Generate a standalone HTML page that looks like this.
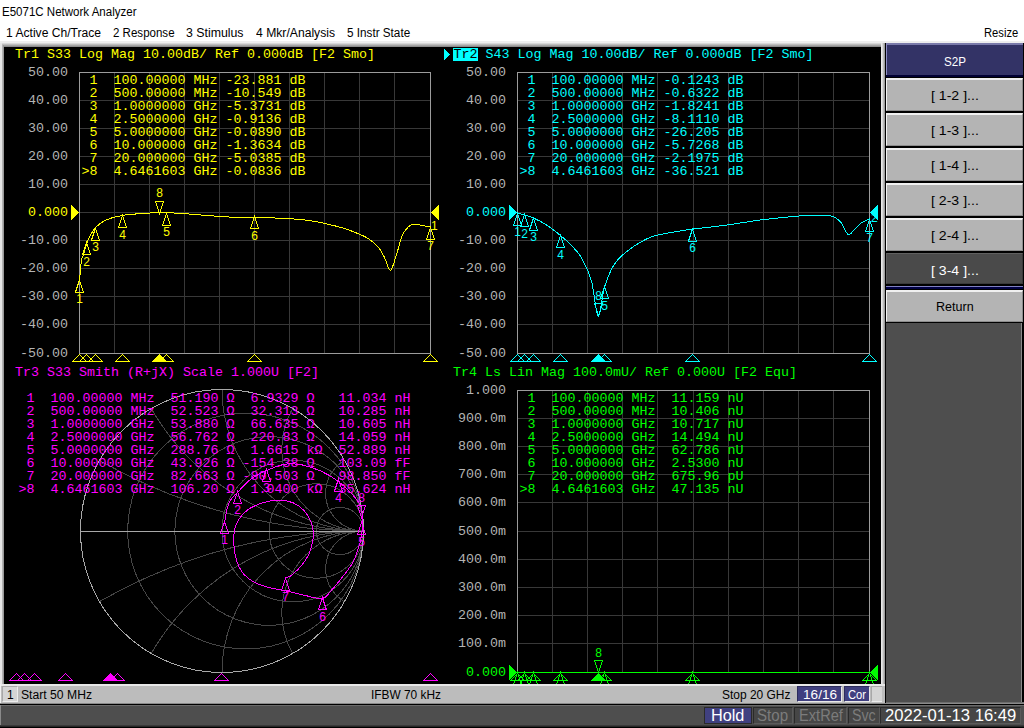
<!DOCTYPE html>
<html><head><meta charset="utf-8">
<style>
html,body{margin:0;padding:0;}
body{width:1024px;height:728px;position:relative;overflow:hidden;background:#ffffff;font-family:"Liberation Sans",sans-serif;}
.t{position:absolute;white-space:pre;line-height:1;}
.b{position:absolute;box-sizing:border-box;}
svg text{white-space:pre;}
</style></head><body>

<div class="t" style="left:1.5px;top:6px;font-size:12px;color:#000;transform:scaleX(0.96);transform-origin:0 0;">E5071C Network Analyzer</div>
<div class="t" style="left:6px;top:27px;font-size:12px;color:#000;transform:scaleX(1.009);transform-origin:0 0;">1 Active Ch/Trace</div>
<div class="t" style="left:113px;top:27px;font-size:12px;color:#000;transform:scaleX(0.961);transform-origin:0 0;">2 Response</div>
<div class="t" style="left:185.5px;top:27px;font-size:12px;color:#000;transform:scaleX(1.027);transform-origin:0 0;">3 Stimulus</div>
<div class="t" style="left:256px;top:27px;font-size:12px;color:#000;transform:scaleX(1.013);transform-origin:0 0;">4 Mkr/Analysis</div>
<div class="t" style="left:347px;top:27px;font-size:12px;color:#000;transform:scaleX(0.976);transform-origin:0 0;">5 Instr State</div>
<div class="t" style="left:984px;top:27px;font-size:12px;color:#000;transform:scaleX(0.933);transform-origin:0 0;">Resize</div>
<div class="b" style="left:0px;top:41px;width:1024px;height:2px;background:#eeeeee"></div>
<div class="b" style="left:0px;top:43px;width:885px;height:4px;background:linear-gradient(#e4e4e4,#b0b0b0 50%,#808080)"></div>
<div class="b" style="left:0px;top:43px;width:2px;height:660px;background:#e6e6e6"></div>
<div class="b" style="left:2px;top:45px;width:2px;height:639px;background:linear-gradient(90deg,#c0c0c0,#8c8c8c)"></div>
<div class="b" style="left:4px;top:47px;width:877px;height:637px;background:#000"></div>
<div class="b" style="left:881px;top:43px;width:4px;height:660px;background:linear-gradient(90deg,#f0f0f0,#e0e0e0 30%,#909090)"></div>
<div class="b" style="left:885px;top:43px;width:139px;height:660px;background:#000"></div>
<div class="b" style="left:886px;top:323px;width:136px;height:379px;background:#4e4e4e;border-right:1px solid #8a8a8a"></div>
<div class="b" style="left:886px;top:702px;width:138px;height:1px;background:#6e6e6e"></div>
<div class="b" style="left:886px;top:43px;width:137px;height:32px;background:#333366;border-top:2px solid #7a7aaa;border-left:1px solid #8c8cc4"></div>
<div class="b" style="left:886px;top:75px;width:137px;height:2px;background:#000033"></div>
<div class="t" style="left:944px;top:56px;font-size:12px;color:#ffffff;transform:scaleX(0.9700176366843034);transform-origin:0 0;">S2P</div>
<div class="b" style="left:886px;top:78px;width:137px;height:33px;background:#b4b4b4;border-top:2px solid #f0f0f0;border-left:1px solid #f4f4f4;border-bottom:1px solid #8c8c8c;border-right:1px solid #8c8c8c"></div>
<div class="t" style="left:930.5px;top:90px;font-size:12px;color:#000;transform:scaleX(1.175024582104228);transform-origin:0 0;">[ 1-2 ]...</div>
<div class="b" style="left:886px;top:113px;width:137px;height:33px;background:#b4b4b4;border-top:2px solid #f0f0f0;border-left:1px solid #f4f4f4;border-bottom:1px solid #8c8c8c;border-right:1px solid #8c8c8c"></div>
<div class="t" style="left:930.5px;top:125px;font-size:12px;color:#000;transform:scaleX(1.175024582104228);transform-origin:0 0;">[ 1-3 ]...</div>
<div class="b" style="left:886px;top:148px;width:137px;height:33px;background:#b4b4b4;border-top:2px solid #f0f0f0;border-left:1px solid #f4f4f4;border-bottom:1px solid #8c8c8c;border-right:1px solid #8c8c8c"></div>
<div class="t" style="left:930.5px;top:160px;font-size:12px;color:#000;transform:scaleX(1.175024582104228);transform-origin:0 0;">[ 1-4 ]...</div>
<div class="b" style="left:886px;top:183px;width:137px;height:33px;background:#b4b4b4;border-top:2px solid #f0f0f0;border-left:1px solid #f4f4f4;border-bottom:1px solid #8c8c8c;border-right:1px solid #8c8c8c"></div>
<div class="t" style="left:930.5px;top:195px;font-size:12px;color:#000;transform:scaleX(1.175024582104228);transform-origin:0 0;">[ 2-3 ]...</div>
<div class="b" style="left:886px;top:218px;width:137px;height:33px;background:#b4b4b4;border-top:2px solid #f0f0f0;border-left:1px solid #f4f4f4;border-bottom:1px solid #8c8c8c;border-right:1px solid #8c8c8c"></div>
<div class="t" style="left:930.5px;top:230px;font-size:12px;color:#000;transform:scaleX(1.175024582104228);transform-origin:0 0;">[ 2-4 ]...</div>
<div class="b" style="left:886px;top:253px;width:137px;height:31px;background:#4a4a4a;border-top:1px solid #606060;border-left:1px solid #5c5c5c;border-bottom:1px solid #3a3a3a;border-right:1px solid #3a3a3a"></div>
<div class="t" style="left:930.5px;top:265px;font-size:12px;color:#ffffff;transform:scaleX(1.175024582104228);transform-origin:0 0;">[ 3-4 ]...</div>
<div class="b" style="left:886px;top:286px;width:137px;height:3px;background:#000044;border-top:1px solid #8080c0"></div>
<div class="b" style="left:886px;top:290px;width:137px;height:32px;background:#b4b4b4;border-top:2px solid #f0f0f0;border-left:1px solid #f4f4f4;border-bottom:1px solid #8c8c8c;border-right:1px solid #8c8c8c"></div>
<div class="t" style="left:936.2px;top:301px;font-size:12px;color:#000;transform:scaleX(1.0438645197112715);transform-origin:0 0;">Return</div>
<svg width="1024" height="728" style="position:absolute;left:0;top:0" shape-rendering="crispEdges">
<defs><clipPath id="pa"><rect x="4" y="47" width="877" height="637"/></clipPath></defs><g clip-path="url(#pa)">
<path d="M114.5 72.5V353.5 M149.5 72.5V353.5 M184.5 72.5V353.5 M219.5 72.5V353.5 M254.5 72.5V353.5 M289.5 72.5V353.5 M324.5 72.5V353.5 M359.5 72.5V353.5 M394.5 72.5V353.5 M79.5 100.5H430.5 M79.5 128.5H430.5 M79.5 156.5H430.5 M79.5 184.5H430.5 M79.5 212.5H430.5 M79.5 240.5H430.5 M79.5 268.5H430.5 M79.5 296.5H430.5 M79.5 324.5H430.5" stroke="#383838" stroke-width="1" fill="none"/>
<rect x="79.5" y="72.5" width="351" height="281" fill="none" stroke="#9c9c9c" stroke-width="1"/>
<text x="68" y="76" fill="#b4b4b4" font-size="13.33" text-anchor="end" font-family="Liberation Mono" >50.00</text>
<text x="68" y="104" fill="#b4b4b4" font-size="13.33" text-anchor="end" font-family="Liberation Mono" >40.00</text>
<text x="68" y="132" fill="#b4b4b4" font-size="13.33" text-anchor="end" font-family="Liberation Mono" >30.00</text>
<text x="68" y="160" fill="#b4b4b4" font-size="13.33" text-anchor="end" font-family="Liberation Mono" >20.00</text>
<text x="68" y="188" fill="#b4b4b4" font-size="13.33" text-anchor="end" font-family="Liberation Mono" >10.00</text>
<text x="68" y="216" fill="#ffff00" font-size="13.33" text-anchor="end" font-family="Liberation Mono" >0.000</text>
<text x="68" y="244" fill="#b4b4b4" font-size="13.33" text-anchor="end" font-family="Liberation Mono" >-10.00</text>
<text x="68" y="272" fill="#b4b4b4" font-size="13.33" text-anchor="end" font-family="Liberation Mono" >-20.00</text>
<text x="68" y="300" fill="#b4b4b4" font-size="13.33" text-anchor="end" font-family="Liberation Mono" >-30.00</text>
<text x="68" y="328" fill="#b4b4b4" font-size="13.33" text-anchor="end" font-family="Liberation Mono" >-40.00</text>
<text x="68" y="357" fill="#b4b4b4" font-size="13.33" text-anchor="end" font-family="Liberation Mono" >-50.00</text>
<text x="15" y="58" fill="#ffff00" font-size="13.33" text-anchor="start" font-family="Liberation Mono" xml:space="preserve">Tr1 S33 Log Mag 10.00dB/ Ref 0.000dB [F2 Smo]</text>
<text x="81.5" y="84" fill="#ffff00" font-size="13.33" text-anchor="start" font-family="Liberation Mono" xml:space="preserve"> 1  100.00000 MHz -23.881 dB</text>
<text x="81.5" y="97" fill="#ffff00" font-size="13.33" text-anchor="start" font-family="Liberation Mono" xml:space="preserve"> 2  500.00000 MHz -10.549 dB</text>
<text x="81.5" y="110" fill="#ffff00" font-size="13.33" text-anchor="start" font-family="Liberation Mono" xml:space="preserve"> 3  1.0000000 GHz -5.3731 dB</text>
<text x="81.5" y="123" fill="#ffff00" font-size="13.33" text-anchor="start" font-family="Liberation Mono" xml:space="preserve"> 4  2.5000000 GHz -0.9136 dB</text>
<text x="81.5" y="136" fill="#ffff00" font-size="13.33" text-anchor="start" font-family="Liberation Mono" xml:space="preserve"> 5  5.0000000 GHz -0.0890 dB</text>
<text x="81.5" y="149" fill="#ffff00" font-size="13.33" text-anchor="start" font-family="Liberation Mono" xml:space="preserve"> 6  10.000000 GHz -1.3634 dB</text>
<text x="81.5" y="162" fill="#ffff00" font-size="13.33" text-anchor="start" font-family="Liberation Mono" xml:space="preserve"> 7  20.000000 GHz -5.0385 dB</text>
<text x="81.5" y="175" fill="#ffff00" font-size="13.33" text-anchor="start" font-family="Liberation Mono" xml:space="preserve">&gt;8  4.6461603 GHz -0.0836 dB</text>
<path d="M79.50 282.50 C79.67 280.37 80.15 273.48 80.50 269.70 C80.85 265.92 81.15 262.15 81.60 259.80 C82.05 257.45 82.35 258.32 83.20 255.60 C84.05 252.88 85.57 246.77 86.70 243.50 C87.83 240.23 88.53 238.65 90.00 236.00 C91.47 233.35 92.98 230.20 95.50 227.60 C98.02 225.00 100.72 222.42 105.10 220.40 C109.48 218.38 115.05 216.68 121.80 215.50 C128.55 214.32 139.30 213.77 145.60 213.30 C151.90 212.83 156.15 212.80 159.60 212.70 C163.05 212.60 162.78 212.58 166.30 212.70 C169.82 212.82 174.78 213.00 180.70 213.40 C186.62 213.80 195.35 214.60 201.80 215.10 C208.25 215.60 213.03 216.00 219.40 216.40 C225.77 216.80 230.73 217.23 240.00 217.50 C249.27 217.77 266.53 217.78 275.00 218.00 C283.47 218.22 285.23 218.40 290.80 218.80 C296.37 219.20 302.87 219.65 308.40 220.40 C313.93 221.15 318.15 222.00 324.00 223.30 C329.85 224.60 337.67 226.42 343.50 228.20 C349.33 229.98 354.77 232.20 359.00 234.00 C363.23 235.80 365.62 236.72 368.90 239.00 C372.18 241.28 376.10 244.62 378.70 247.70 C381.30 250.78 382.55 253.75 384.50 257.50 C386.45 261.25 388.44 270.53 390.40 270.20 C392.36 269.87 394.32 261.20 396.25 255.50 C398.18 249.80 400.04 240.72 402.00 236.00 C403.96 231.28 406.03 229.15 408.00 227.20 C409.97 225.25 411.53 224.62 413.80 224.30 C416.07 223.98 418.83 224.85 421.60 225.30 C424.37 225.75 428.93 226.72 430.40 227.00" fill="none" stroke="#ffff00" stroke-width="1"/>
<path d="M79.5 280.10561 L75.5 292.10561 L83.5 292.10561 Z" fill="none" stroke="#ffff00" stroke-width="1"/>
<text x="79.5" y="303.10561" fill="#ffff00" font-size="12" text-anchor="middle" font-family="Liberation Sans" >1</text>
<path d="M86.5 242.64269 L82.5 254.64269 L90.5 254.64269 Z" fill="none" stroke="#ffff00" stroke-width="1"/>
<text x="86.5" y="265.64269" fill="#ffff00" font-size="12" text-anchor="middle" font-family="Liberation Sans" >2</text>
<path d="M95.5 228.098411 L91.5 240.098411 L99.5 240.098411 Z" fill="none" stroke="#ffff00" stroke-width="1"/>
<text x="95.5" y="251.098411" fill="#ffff00" font-size="12" text-anchor="middle" font-family="Liberation Sans" >3</text>
<path d="M122.5 215.567216 L118.5 227.567216 L126.5 227.567216 Z" fill="none" stroke="#ffff00" stroke-width="1"/>
<text x="122.5" y="238.567216" fill="#ffff00" font-size="12" text-anchor="middle" font-family="Liberation Sans" >4</text>
<path d="M166.5 213.25009 L162.5 225.25009 L170.5 225.25009 Z" fill="none" stroke="#ffff00" stroke-width="1"/>
<text x="166.5" y="236.25009" fill="#ffff00" font-size="12" text-anchor="middle" font-family="Liberation Sans" >5</text>
<path d="M254.5 216.831154 L250.5 228.831154 L258.5 228.831154 Z" fill="none" stroke="#ffff00" stroke-width="1"/>
<text x="254.5" y="239.831154" fill="#ffff00" font-size="12" text-anchor="middle" font-family="Liberation Sans" >6</text>
<path d="M430.5 227.158185 L426.5 239.158185 L434.5 239.158185 Z" fill="none" stroke="#ffff00" stroke-width="1"/>
<text x="430.5" y="250.158185" fill="#ffff00" font-size="12" text-anchor="middle" font-family="Liberation Sans" >7</text>
<path d="M159.5 213.234916 L155.5 201.234916 L163.5 201.234916 Z" fill="none" stroke="#ffff00" stroke-width="1"/>
<text x="159.5" y="197.234916" fill="#ffff00" font-size="12" text-anchor="middle" font-family="Liberation Sans" >8</text>
<text x="431" y="229.5" fill="#ffff00" font-size="12" text-anchor="start" font-family="Liberation Sans" >1</text>
<path d="M79 212.5 L71 204.5 L71 220.5 Z" fill="#ffff00"/>
<path d="M431 212.5 L439 204.5 L439 220.5 Z" fill="#ffff00"/>
<path d="M79.5 354.5 L72.5 361.5 L86.5 361.5 Z" fill="none" stroke="#ffff00" stroke-width="1"/>
<path d="M86.5 354.5 L79.5 361.5 L93.5 361.5 Z" fill="none" stroke="#ffff00" stroke-width="1"/>
<path d="M95.5 354.5 L88.5 361.5 L102.5 361.5 Z" fill="none" stroke="#ffff00" stroke-width="1"/>
<path d="M122.5 354.5 L115.5 361.5 L129.5 361.5 Z" fill="none" stroke="#ffff00" stroke-width="1"/>
<path d="M166.5 354.5 L159.5 361.5 L173.5 361.5 Z" fill="none" stroke="#ffff00" stroke-width="1"/>
<path d="M254.5 354.5 L247.5 361.5 L261.5 361.5 Z" fill="none" stroke="#ffff00" stroke-width="1"/>
<path d="M430.5 354.5 L423.5 361.5 L437.5 361.5 Z" fill="none" stroke="#ffff00" stroke-width="1"/>
<path d="M159.5 354.5 L152.5 361.5 L166.5 361.5 Z" fill="#ffff00" stroke="#ffff00" stroke-width="1"/>
<path d="M552.5 72.5V353.5 M587.5 72.5V353.5 M622.5 72.5V353.5 M657.5 72.5V353.5 M693.5 72.5V353.5 M728.5 72.5V353.5 M763.5 72.5V353.5 M798.5 72.5V353.5 M833.5 72.5V353.5 M517.5 100.5H869.5 M517.5 128.5H869.5 M517.5 156.5H869.5 M517.5 184.5H869.5 M517.5 212.5H869.5 M517.5 240.5H869.5 M517.5 268.5H869.5 M517.5 296.5H869.5 M517.5 324.5H869.5" stroke="#383838" stroke-width="1" fill="none"/>
<rect x="517.5" y="72.5" width="352" height="281" fill="none" stroke="#9c9c9c" stroke-width="1"/>
<text x="506" y="76" fill="#b4b4b4" font-size="13.33" text-anchor="end" font-family="Liberation Mono" >50.00</text>
<text x="506" y="104" fill="#b4b4b4" font-size="13.33" text-anchor="end" font-family="Liberation Mono" >40.00</text>
<text x="506" y="132" fill="#b4b4b4" font-size="13.33" text-anchor="end" font-family="Liberation Mono" >30.00</text>
<text x="506" y="160" fill="#b4b4b4" font-size="13.33" text-anchor="end" font-family="Liberation Mono" >20.00</text>
<text x="506" y="188" fill="#b4b4b4" font-size="13.33" text-anchor="end" font-family="Liberation Mono" >10.00</text>
<text x="506" y="216" fill="#00ffff" font-size="13.33" text-anchor="end" font-family="Liberation Mono" >0.000</text>
<text x="506" y="244" fill="#b4b4b4" font-size="13.33" text-anchor="end" font-family="Liberation Mono" >-10.00</text>
<text x="506" y="272" fill="#b4b4b4" font-size="13.33" text-anchor="end" font-family="Liberation Mono" >-20.00</text>
<text x="506" y="300" fill="#b4b4b4" font-size="13.33" text-anchor="end" font-family="Liberation Mono" >-30.00</text>
<text x="506" y="328" fill="#b4b4b4" font-size="13.33" text-anchor="end" font-family="Liberation Mono" >-40.00</text>
<text x="506" y="357" fill="#b4b4b4" font-size="13.33" text-anchor="end" font-family="Liberation Mono" >-50.00</text>
<path d="M444 48 L450 54.5 L444 61 Z" fill="#00ffff"/>
<rect x="453" y="48" width="25" height="13" fill="#00ffff"/>
<text x="453.5" y="58" fill="#000000" font-size="13.33" text-anchor="start" font-family="Liberation Mono" >Tr2</text>
<text x="477.5" y="58" fill="#00ffff" font-size="13.33" text-anchor="start" font-family="Liberation Mono" xml:space="preserve"> S43 Log Mag 10.00dB/ Ref 0.000dB [F2 Smo]</text>
<text x="519.5" y="84" fill="#00ffff" font-size="13.33" text-anchor="start" font-family="Liberation Mono" xml:space="preserve"> 1  100.00000 MHz -0.1243 dB</text>
<text x="519.5" y="97" fill="#00ffff" font-size="13.33" text-anchor="start" font-family="Liberation Mono" xml:space="preserve"> 2  500.00000 MHz -0.6322 dB</text>
<text x="519.5" y="110" fill="#00ffff" font-size="13.33" text-anchor="start" font-family="Liberation Mono" xml:space="preserve"> 3  1.0000000 GHz -1.8241 dB</text>
<text x="519.5" y="123" fill="#00ffff" font-size="13.33" text-anchor="start" font-family="Liberation Mono" xml:space="preserve"> 4  2.5000000 GHz -8.1110 dB</text>
<text x="519.5" y="136" fill="#00ffff" font-size="13.33" text-anchor="start" font-family="Liberation Mono" xml:space="preserve"> 5  5.0000000 GHz -26.205 dB</text>
<text x="519.5" y="149" fill="#00ffff" font-size="13.33" text-anchor="start" font-family="Liberation Mono" xml:space="preserve"> 6  10.000000 GHz -5.7268 dB</text>
<text x="519.5" y="162" fill="#00ffff" font-size="13.33" text-anchor="start" font-family="Liberation Mono" xml:space="preserve"> 7  20.000000 GHz -2.1975 dB</text>
<text x="519.5" y="175" fill="#00ffff" font-size="13.33" text-anchor="start" font-family="Liberation Mono" xml:space="preserve">&gt;8  4.6461603 GHz -36.521 dB</text>
<path d="M517.40 212.80 C519.88 213.60 527.70 215.73 532.30 217.60 C536.90 219.47 540.37 221.07 545.00 224.00 C549.63 226.93 555.60 231.53 560.10 235.20 C564.60 238.87 568.28 241.97 572.00 246.00 C575.72 250.03 579.13 253.47 582.40 259.40 C585.67 265.33 588.98 272.17 591.60 281.60 C594.22 291.03 595.93 315.07 598.10 316.00 C600.27 316.93 601.97 295.70 604.60 287.20 C607.23 278.70 609.88 271.20 613.90 265.00 C617.92 258.80 622.52 254.65 628.70 250.00 C634.88 245.35 642.95 240.18 651.00 237.10 C659.05 234.02 670.03 232.83 677.00 231.50 C683.97 230.17 684.45 230.18 692.80 229.10 C701.15 228.02 715.20 226.60 727.10 225.00 C739.00 223.40 751.83 221.03 764.20 219.50 C776.57 217.97 792.00 216.53 801.30 215.80 C810.60 215.07 815.23 215.13 820.00 215.10 C824.77 215.07 827.15 215.05 829.90 215.60 C832.65 216.15 834.58 217.17 836.50 218.40 C838.42 219.63 839.48 220.32 841.40 223.00 C843.32 225.68 846.07 233.13 848.00 234.50 C849.93 235.87 850.80 233.12 853.00 231.20 C855.20 229.28 858.45 225.05 861.20 223.00 C863.95 220.95 868.12 219.58 869.50 218.90" fill="none" stroke="#00ffff" stroke-width="1"/>
<path d="M517.5 213.349283 L513.5 225.349283 L521.5 225.349283 Z" fill="none" stroke="#00ffff" stroke-width="1"/>
<text x="517.5" y="236.349283" fill="#00ffff" font-size="12" text-anchor="middle" font-family="Liberation Sans" >1</text>
<path d="M524.5 214.776482 L520.5 226.776482 L528.5 226.776482 Z" fill="none" stroke="#00ffff" stroke-width="1"/>
<text x="524.5" y="237.776482" fill="#00ffff" font-size="12" text-anchor="middle" font-family="Liberation Sans" >2</text>
<path d="M533.5 218.125721 L529.5 230.125721 L537.5 230.125721 Z" fill="none" stroke="#00ffff" stroke-width="1"/>
<text x="533.5" y="241.125721" fill="#00ffff" font-size="12" text-anchor="middle" font-family="Liberation Sans" >3</text>
<path d="M560.5 235.79191 L556.5 247.79191 L564.5 247.79191 Z" fill="none" stroke="#00ffff" stroke-width="1"/>
<text x="560.5" y="258.79191000000003" fill="#00ffff" font-size="12" text-anchor="middle" font-family="Liberation Sans" >4</text>
<path d="M604.5 286.63605 L600.5 298.63605 L608.5 298.63605 Z" fill="none" stroke="#00ffff" stroke-width="1"/>
<text x="604.5" y="309.63605" fill="#00ffff" font-size="12" text-anchor="middle" font-family="Liberation Sans" >5</text>
<path d="M692.5 229.092308 L688.5 241.092308 L696.5 241.092308 Z" fill="none" stroke="#00ffff" stroke-width="1"/>
<text x="692.5" y="252.092308" fill="#00ffff" font-size="12" text-anchor="middle" font-family="Liberation Sans" >6</text>
<path d="M869.5 219.174975 L865.5 231.174975 L873.5 231.174975 Z" fill="none" stroke="#00ffff" stroke-width="1"/>
<text x="869.5" y="242.174975" fill="#00ffff" font-size="12" text-anchor="middle" font-family="Liberation Sans" >7</text>
<path d="M598.5 315.62401 L594.5 303.62401 L602.5 303.62401 Z" fill="none" stroke="#00ffff" stroke-width="1"/>
<text x="598.5" y="299.62401" fill="#00ffff" font-size="12" text-anchor="middle" font-family="Liberation Sans" >8</text>
<text x="871" y="222" fill="#00ffff" font-size="12" text-anchor="start" font-family="Liberation Sans" >2</text>
<path d="M517 212.5 L509 204.5 L509 220.5 Z" fill="#00ffff"/>
<path d="M870 212.5 L878 204.5 L878 220.5 Z" fill="#00ffff"/>
<path d="M517.5 354.5 L510.5 361.5 L524.5 361.5 Z" fill="none" stroke="#00ffff" stroke-width="1"/>
<path d="M524.5 354.5 L517.5 361.5 L531.5 361.5 Z" fill="none" stroke="#00ffff" stroke-width="1"/>
<path d="M533.5 354.5 L526.5 361.5 L540.5 361.5 Z" fill="none" stroke="#00ffff" stroke-width="1"/>
<path d="M560.5 354.5 L553.5 361.5 L567.5 361.5 Z" fill="none" stroke="#00ffff" stroke-width="1"/>
<path d="M604.5 354.5 L597.5 361.5 L611.5 361.5 Z" fill="none" stroke="#00ffff" stroke-width="1"/>
<path d="M692.5 354.5 L685.5 361.5 L699.5 361.5 Z" fill="none" stroke="#00ffff" stroke-width="1"/>
<path d="M869.5 354.5 L862.5 361.5 L876.5 361.5 Z" fill="none" stroke="#00ffff" stroke-width="1"/>
<path d="M598.5 354.5 L591.5 361.5 L605.5 361.5 Z" fill="#00ffff" stroke="#00ffff" stroke-width="1"/>
<defs><clipPath id="sc"><circle cx="222.0" cy="531.0" r="141.5"/></clipPath></defs>
<g clip-path="url(#sc)"><circle cx="245.58" cy="531.0" r="117.92" fill="none" stroke="#464646"/><circle cx="269.17" cy="531.0" r="94.33" fill="none" stroke="#464646"/><circle cx="292.75" cy="531.0" r="70.75" fill="none" stroke="#464646"/><circle cx="316.33" cy="531.0" r="47.17" fill="none" stroke="#464646"/><circle cx="339.92" cy="531.0" r="23.58" fill="none" stroke="#464646"/><circle cx="363.50" cy="2.91" r="528.09" fill="none" stroke="#464646"/><circle cx="363.50" cy="1059.09" r="528.09" fill="none" stroke="#464646"/><circle cx="363.50" cy="285.91" r="245.09" fill="none" stroke="#464646"/><circle cx="363.50" cy="776.09" r="245.09" fill="none" stroke="#464646"/><circle cx="363.50" cy="389.50" r="141.50" fill="none" stroke="#464646"/><circle cx="363.50" cy="672.50" r="141.50" fill="none" stroke="#464646"/><circle cx="363.50" cy="449.30" r="81.70" fill="none" stroke="#464646"/><circle cx="363.50" cy="612.70" r="81.70" fill="none" stroke="#464646"/><circle cx="363.50" cy="493.09" r="37.91" fill="none" stroke="#464646"/><circle cx="363.50" cy="568.91" r="37.91" fill="none" stroke="#464646"/></g>
<circle cx="222.0" cy="531.0" r="141.5" fill="none" stroke="#a8a8a8"/>
<path d="M80.5 531.5H363.5" stroke="#a8a8a8"/>
<text x="15" y="376" fill="#ff00ff" font-size="13.33" text-anchor="start" font-family="Liberation Mono" xml:space="preserve">Tr3 S33 Smith (R+jX) Scale 1.000U [F2]</text>
<text x="18.5" y="402" fill="#ff00ff" font-size="13.33" text-anchor="start" font-family="Liberation Mono" xml:space="preserve"> 1  100.00000 MHz  51.190 Ω  6.9329 Ω   11.034 nH</text>
<text x="18.5" y="415" fill="#ff00ff" font-size="13.33" text-anchor="start" font-family="Liberation Mono" xml:space="preserve"> 2  500.00000 MHz  52.523 Ω  32.313 Ω   10.285 nH</text>
<text x="18.5" y="428" fill="#ff00ff" font-size="13.33" text-anchor="start" font-family="Liberation Mono" xml:space="preserve"> 3  1.0000000 GHz  53.880 Ω  66.635 Ω   10.605 nH</text>
<text x="18.5" y="441" fill="#ff00ff" font-size="13.33" text-anchor="start" font-family="Liberation Mono" xml:space="preserve"> 4  2.5000000 GHz  56.762 Ω  220.83 Ω   14.059 nH</text>
<text x="18.5" y="454" fill="#ff00ff" font-size="13.33" text-anchor="start" font-family="Liberation Mono" xml:space="preserve"> 5  5.0000000 GHz  288.76 Ω  1.6615 kΩ  52.889 nH</text>
<text x="18.5" y="467" fill="#ff00ff" font-size="13.33" text-anchor="start" font-family="Liberation Mono" xml:space="preserve"> 6  10.000000 GHz  43.926 Ω -154.38 Ω   103.09 fF</text>
<text x="18.5" y="480" fill="#ff00ff" font-size="13.33" text-anchor="start" font-family="Liberation Mono" xml:space="preserve"> 7  20.000000 GHz  82.663 Ω -80.503 Ω   98.850 fF</text>
<text x="18.5" y="493" fill="#ff00ff" font-size="13.33" text-anchor="start" font-family="Liberation Mono" xml:space="preserve">&gt;8  4.6461603 GHz  106.20 Ω  1.0400 kΩ  35.624 nH</text>
<path d="M224.40 524.40 C224.78 522.05 225.77 514.20 226.70 510.30 C227.63 506.40 228.30 503.87 230.00 501.00 C231.70 498.13 233.40 496.77 236.90 493.10 C240.40 489.43 246.05 482.77 251.00 479.00 C255.95 475.23 260.88 472.97 266.60 470.50 C272.32 468.03 279.32 465.12 285.30 464.20 C291.28 463.28 296.51 463.82 302.50 465.00 C308.49 466.18 315.27 468.52 321.25 471.25 C327.23 473.98 333.19 477.49 338.40 481.40 C343.61 485.31 348.73 490.40 352.50 494.70 C356.27 499.00 359.32 502.25 361.00 507.20 C362.68 512.15 362.45 520.23 362.60 524.40 C362.75 528.57 362.42 528.82 361.90 532.20 C361.38 535.58 361.00 539.68 359.50 544.70 C358.00 549.72 355.83 556.80 352.90 562.30 C349.97 567.80 345.57 572.93 341.90 577.70 C338.23 582.47 334.20 587.42 330.90 590.90 C327.60 594.38 326.50 597.87 322.10 598.60 C317.70 599.33 310.55 596.58 304.50 595.30 C298.45 594.02 291.67 592.18 285.80 590.90 C279.93 589.62 274.60 589.07 269.30 587.60 C264.00 586.13 258.38 584.48 254.00 582.10 C249.62 579.72 245.93 576.97 243.00 573.30 C240.07 569.63 237.95 565.23 236.40 560.10 C234.85 554.97 233.88 548.00 233.70 542.50 C233.52 537.00 233.75 531.85 235.30 527.10 C236.85 522.35 239.52 517.65 243.00 514.00 C246.48 510.35 250.70 507.48 256.20 505.20 C261.70 502.92 269.78 500.67 276.00 500.30 C282.22 499.93 288.38 500.72 293.50 503.00 C298.62 505.28 303.40 509.25 306.70 514.00 C310.00 518.75 312.75 525.28 313.30 531.50 C313.85 537.72 311.83 545.80 310.00 551.30 C308.17 556.80 305.42 560.47 302.30 564.50 C299.18 568.53 294.05 573.30 291.30 575.50 C288.55 577.70 286.72 577.33 285.80 577.70" fill="none" stroke="#ff00ff" stroke-width="1"/>
<path d="M224.5 521.4640860994216 L220.5 533.4640860994216 L228.5 533.4640860994216 Z" fill="none" stroke="#ff00ff" stroke-width="1"/>
<text x="224.5" y="544.4640860994216" fill="#ff00ff" font-size="12" text-anchor="middle" font-family="Liberation Sans" >1</text>
<path d="M237.5 491.4305347299692 L233.5 503.4305347299692 L241.5 503.4305347299692 Z" fill="none" stroke="#ff00ff" stroke-width="1"/>
<text x="237.5" y="514.4305347299692" fill="#ff00ff" font-size="12" text-anchor="middle" font-family="Liberation Sans" >2</text>
<path d="M266.5 469.0954590143911 L262.5 481.0954590143911 L270.5 481.0954590143911 Z" fill="none" stroke="#ff00ff" stroke-width="1"/>
<text x="266.5" y="492.0954590143911" fill="#ff00ff" font-size="12" text-anchor="middle" font-family="Liberation Sans" >3</text>
<path d="M338.5 479.06289813569754 L334.5 491.06289813569754 L342.5 491.06289813569754 Z" fill="none" stroke="#ff00ff" stroke-width="1"/>
<text x="338.5" y="502.06289813569754" fill="#ff00ff" font-size="12" text-anchor="middle" font-family="Liberation Sans" >4</text>
<path d="M361.5 522.8234990660277 L357.5 534.8234990660277 L365.5 534.8234990660277 Z" fill="none" stroke="#ff00ff" stroke-width="1"/>
<text x="361.5" y="545.8234990660277" fill="#ff00ff" font-size="12" text-anchor="middle" font-family="Liberation Sans" >5</text>
<path d="M322.5 597.8950669565572 L318.5 609.8950669565572 L326.5 609.8950669565572 Z" fill="none" stroke="#ff00ff" stroke-width="1"/>
<text x="322.5" y="620.8950669565572" fill="#ff00ff" font-size="12" text-anchor="middle" font-family="Liberation Sans" >6</text>
<path d="M285.5 578.3051400502101 L281.5 590.3051400502101 L289.5 590.3051400502101 Z" fill="none" stroke="#ff00ff" stroke-width="1"/>
<text x="285.5" y="601.3051400502101" fill="#ff00ff" font-size="12" text-anchor="middle" font-family="Liberation Sans" >7</text>
<path d="M361.5 517.6943754459545 L357.5 505.6943754459545 L365.5 505.6943754459545 Z" fill="none" stroke="#ff00ff" stroke-width="1"/>
<text x="361.5" y="501.6943754459545" fill="#ff00ff" font-size="12" text-anchor="middle" font-family="Liberation Sans" >8</text>
<path d="M16.5 673.5 L9.5 680.5 L23.5 680.5 Z" fill="none" stroke="#ff00ff" stroke-width="1"/>
<path d="M24.5 673.5 L17.5 680.5 L31.5 680.5 Z" fill="none" stroke="#ff00ff" stroke-width="1"/>
<path d="M34.5 673.5 L27.5 680.5 L41.5 680.5 Z" fill="none" stroke="#ff00ff" stroke-width="1"/>
<path d="M65.5 673.5 L58.5 680.5 L72.5 680.5 Z" fill="none" stroke="#ff00ff" stroke-width="1"/>
<path d="M117.5 673.5 L110.5 680.5 L124.5 680.5 Z" fill="none" stroke="#ff00ff" stroke-width="1"/>
<path d="M221.5 673.5 L214.5 680.5 L228.5 680.5 Z" fill="none" stroke="#ff00ff" stroke-width="1"/>
<path d="M430.5 673.5 L423.5 680.5 L437.5 680.5 Z" fill="none" stroke="#ff00ff" stroke-width="1"/>
<path d="M110.5 673.5 L103.5 680.5 L117.5 680.5 Z" fill="#ff00ff" stroke="#ff00ff" stroke-width="1"/>
<path d="M552.5 390.5V672.5 M587.5 390.5V672.5 M622.5 390.5V672.5 M657.5 390.5V672.5 M693.5 390.5V672.5 M728.5 390.5V672.5 M763.5 390.5V672.5 M798.5 390.5V672.5 M833.5 390.5V672.5 M517.5 418.5H869.5 M517.5 446.5H869.5 M517.5 474.5H869.5 M517.5 502.5H869.5 M517.5 531.5H869.5 M517.5 559.5H869.5 M517.5 587.5H869.5 M517.5 615.5H869.5 M517.5 643.5H869.5" stroke="#383838" stroke-width="1" fill="none"/>
<rect x="517.5" y="390.5" width="352" height="282" fill="none" stroke="#9c9c9c" stroke-width="1"/>
<text x="506" y="394" fill="#b4b4b4" font-size="13.33" text-anchor="end" font-family="Liberation Mono" >1.000</text>
<text x="506" y="422" fill="#b4b4b4" font-size="13.33" text-anchor="end" font-family="Liberation Mono" >900.0m</text>
<text x="506" y="450" fill="#b4b4b4" font-size="13.33" text-anchor="end" font-family="Liberation Mono" >800.0m</text>
<text x="506" y="478" fill="#b4b4b4" font-size="13.33" text-anchor="end" font-family="Liberation Mono" >700.0m</text>
<text x="506" y="506" fill="#b4b4b4" font-size="13.33" text-anchor="end" font-family="Liberation Mono" >600.0m</text>
<text x="506" y="535" fill="#b4b4b4" font-size="13.33" text-anchor="end" font-family="Liberation Mono" >500.0m</text>
<text x="506" y="563" fill="#b4b4b4" font-size="13.33" text-anchor="end" font-family="Liberation Mono" >400.0m</text>
<text x="506" y="591" fill="#b4b4b4" font-size="13.33" text-anchor="end" font-family="Liberation Mono" >300.0m</text>
<text x="506" y="619" fill="#b4b4b4" font-size="13.33" text-anchor="end" font-family="Liberation Mono" >200.0m</text>
<text x="506" y="647" fill="#b4b4b4" font-size="13.33" text-anchor="end" font-family="Liberation Mono" >100.0m</text>
<text x="506" y="676" fill="#00ff00" font-size="13.33" text-anchor="end" font-family="Liberation Mono" >0.000</text>
<text x="453" y="376" fill="#00ff00" font-size="13.33" text-anchor="start" font-family="Liberation Mono" xml:space="preserve">Tr4 Ls Lin Mag 100.0mU/ Ref 0.000U [F2 Equ]</text>
<text x="519.5" y="402" fill="#00ff00" font-size="13.33" text-anchor="start" font-family="Liberation Mono" xml:space="preserve"> 1  100.00000 MHz  11.159 nU</text>
<text x="519.5" y="415" fill="#00ff00" font-size="13.33" text-anchor="start" font-family="Liberation Mono" xml:space="preserve"> 2  500.00000 MHz  10.406 nU</text>
<text x="519.5" y="428" fill="#00ff00" font-size="13.33" text-anchor="start" font-family="Liberation Mono" xml:space="preserve"> 3  1.0000000 GHz  10.717 nU</text>
<text x="519.5" y="441" fill="#00ff00" font-size="13.33" text-anchor="start" font-family="Liberation Mono" xml:space="preserve"> 4  2.5000000 GHz  14.494 nU</text>
<text x="519.5" y="454" fill="#00ff00" font-size="13.33" text-anchor="start" font-family="Liberation Mono" xml:space="preserve"> 5  5.0000000 GHz  62.786 nU</text>
<text x="519.5" y="467" fill="#00ff00" font-size="13.33" text-anchor="start" font-family="Liberation Mono" xml:space="preserve"> 6  10.000000 GHz  2.5300 nU</text>
<text x="519.5" y="480" fill="#00ff00" font-size="13.33" text-anchor="start" font-family="Liberation Mono" xml:space="preserve"> 7  20.000000 GHz  675.96 pU</text>
<text x="519.5" y="493" fill="#00ff00" font-size="13.33" text-anchor="start" font-family="Liberation Mono" xml:space="preserve">&gt;8  4.6461603 GHz  47.135 nU</text>
<polyline points="517.0,672.5 869.0,672.5" fill="none" stroke="#00ff00" stroke-width="1" stroke-linejoin="round"/>
<path d="M517.5 672.5 L513.5 684.5 L521.5 684.5 Z" fill="none" stroke="#00ff00" stroke-width="1"/>
<text x="517.5" y="695.5" fill="#00ff00" font-size="12" text-anchor="middle" font-family="Liberation Sans" >1</text>
<path d="M524.5 672.5 L520.5 684.5 L528.5 684.5 Z" fill="none" stroke="#00ff00" stroke-width="1"/>
<text x="524.5" y="695.5" fill="#00ff00" font-size="12" text-anchor="middle" font-family="Liberation Sans" >2</text>
<path d="M533.5 672.5 L529.5 684.5 L537.5 684.5 Z" fill="none" stroke="#00ff00" stroke-width="1"/>
<text x="533.5" y="695.5" fill="#00ff00" font-size="12" text-anchor="middle" font-family="Liberation Sans" >3</text>
<path d="M560.5 672.5 L556.5 684.5 L564.5 684.5 Z" fill="none" stroke="#00ff00" stroke-width="1"/>
<text x="560.5" y="695.5" fill="#00ff00" font-size="12" text-anchor="middle" font-family="Liberation Sans" >4</text>
<path d="M604.5 672.5 L600.5 684.5 L608.5 684.5 Z" fill="none" stroke="#00ff00" stroke-width="1"/>
<text x="604.5" y="695.5" fill="#00ff00" font-size="12" text-anchor="middle" font-family="Liberation Sans" >5</text>
<path d="M692.5 672.5 L688.5 684.5 L696.5 684.5 Z" fill="none" stroke="#00ff00" stroke-width="1"/>
<text x="692.5" y="695.5" fill="#00ff00" font-size="12" text-anchor="middle" font-family="Liberation Sans" >6</text>
<path d="M869.5 672.5 L865.5 684.5 L873.5 684.5 Z" fill="none" stroke="#00ff00" stroke-width="1"/>
<text x="869.5" y="695.5" fill="#00ff00" font-size="12" text-anchor="middle" font-family="Liberation Sans" >7</text>
<path d="M598.5 672.5 L594.5 660.5 L602.5 660.5 Z" fill="none" stroke="#00ff00" stroke-width="1"/>
<text x="598.5" y="656.5" fill="#00ff00" font-size="12" text-anchor="middle" font-family="Liberation Sans" >8</text>
<path d="M517 672.5 L509 664.5 L509 680.5 Z" fill="#00ff00"/>
<path d="M870 672.5 L878 664.5 L878 680.5 Z" fill="#00ff00"/>
<path d="M517.5 673.5 L510.5 680.5 L524.5 680.5 Z" fill="none" stroke="#00ff00" stroke-width="1"/>
<path d="M524.5 673.5 L517.5 680.5 L531.5 680.5 Z" fill="none" stroke="#00ff00" stroke-width="1"/>
<path d="M533.5 673.5 L526.5 680.5 L540.5 680.5 Z" fill="none" stroke="#00ff00" stroke-width="1"/>
<path d="M560.5 673.5 L553.5 680.5 L567.5 680.5 Z" fill="none" stroke="#00ff00" stroke-width="1"/>
<path d="M604.5 673.5 L597.5 680.5 L611.5 680.5 Z" fill="none" stroke="#00ff00" stroke-width="1"/>
<path d="M692.5 673.5 L685.5 680.5 L699.5 680.5 Z" fill="none" stroke="#00ff00" stroke-width="1"/>
<path d="M869.5 673.5 L862.5 680.5 L876.5 680.5 Z" fill="none" stroke="#00ff00" stroke-width="1"/>
<path d="M598.5 673.5 L591.5 680.5 L605.5 680.5 Z" fill="#00ff00" stroke="#00ff00" stroke-width="1"/>
</g></svg>
<div class="b" style="left:0px;top:684px;width:885px;height:2px;background:#e8e8e8"></div>
<div class="b" style="left:0px;top:686px;width:885px;height:17px;background:#bcbcbc"></div>
<div class="b" style="left:0px;top:684px;width:1px;height:19px;background:#f0f0f0"></div>
<div class="b" style="left:2px;top:686px;width:16px;height:16px;background:#d4d4d4;border-top:1px solid #a8a8a8;border-left:1px solid #a8a8a8;border-bottom:1px solid #ececec;border-right:1px solid #ececec"></div>
<div class="t" style="left:7px;top:689px;font-size:12px;color:#000;">1</div>
<div class="t" style="left:21px;top:689px;font-size:12px;color:#000;transform:scaleX(1.0139960011425309);transform-origin:0 0;">Start 50 MHz</div>
<div class="t" style="left:371px;top:689px;font-size:12px;color:#000;transform:scaleX(0.9903791737408035);transform-origin:0 0;">IFBW 70 kHz</div>
<div class="t" style="left:722px;top:689px;font-size:12px;color:#000;transform:scaleX(0.9956331877729258);transform-origin:0 0;">Stop 20 GHz</div>
<div class="b" style="left:797px;top:686px;width:45px;height:16px;background:#404080;border-top:1px solid #2c2c5c;border-left:1px solid #2c2c5c;border-bottom:1px solid #e8e8e8;border-right:1px solid #e8e8e8"></div>
<div class="t" style="left:802.5px;top:689px;font-size:12px;color:#fff;transform:scaleX(1.1333333333333333);transform-origin:0 0;">16/16</div>
<div class="b" style="left:844px;top:686px;width:26px;height:16px;background:#404080;border-top:1px solid #2c2c5c;border-left:1px solid #2c2c5c;border-bottom:1px solid #e8e8e8;border-right:1px solid #e8e8e8"></div>
<div class="t" style="left:848px;top:689px;font-size:12px;color:#fff;transform:scaleX(0.9326424870466321);transform-origin:0 0;">Cor</div>
<div class="b" style="left:871px;top:686px;width:11px;height:16px;background:#d4d4d4;border-top:1px solid #a8a8a8;border-left:1px solid #a8a8a8;border-bottom:1px solid #ececec"></div>
<div class="b" style="left:0px;top:703px;width:1024px;height:25px;background:#4e4e4e"></div>
<div class="b" style="left:0px;top:703px;width:1024px;height:1px;background:#8a8a8a"></div>
<div class="b" style="left:0px;top:704px;width:1024px;height:1px;background:#000"></div>
<div class="b" style="left:0px;top:705px;width:1024px;height:1px;background:#6a6a6a"></div>
<div class="b" style="left:0px;top:705px;width:1px;height:20px;background:#8a8a8a"></div>
<div class="b" style="left:0px;top:725px;width:1024px;height:1px;background:#3a3a3a"></div>
<div class="b" style="left:0px;top:726px;width:1024px;height:1px;background:#262626"></div>
<div class="b" style="left:0px;top:727px;width:1024px;height:1px;background:#000"></div>
<div class="b" style="left:704px;top:707px;width:48px;height:17px;background:#404080;border:1px solid #2a2a2a"></div>
<div class="t" style="left:711px;top:708px;font-size:16px;color:#fff;transform:scaleX(1.0151975683890577);transform-origin:0 0;">Hold</div>
<div class="b" style="left:752.5px;top:707px;width:40px;height:17px;background:#464646;border:1px solid #2a2a2a;border-right-color:#5a5a5a;border-bottom-color:#5a5a5a"></div>
<div class="t" style="left:757px;top:708px;font-size:16px;color:#7c7c7c;transform:scaleX(0.9422492401215806);transform-origin:0 0;">Stop</div>
<div class="b" style="left:794px;top:707px;width:53px;height:17px;background:#464646;border:1px solid #2a2a2a;border-right-color:#5a5a5a;border-bottom-color:#5a5a5a"></div>
<div class="t" style="left:798.5px;top:708px;font-size:16px;color:#7c7c7c;transform:scaleX(0.9147609147609147);transform-origin:0 0;">ExtRef</div>
<div class="b" style="left:848px;top:707px;width:32px;height:17px;background:#464646;border:1px solid #2a2a2a;border-right-color:#5a5a5a;border-bottom-color:#5a5a5a"></div>
<div class="t" style="left:852px;top:708px;font-size:16px;color:#7c7c7c;transform:scaleX(0.8876404494382022);transform-origin:0 0;">Svc</div>
<div class="b" style="left:880px;top:707px;width:141px;height:17px;background:#464646;border:1px solid #2a2a2a;border-right-color:#5a5a5a;border-bottom-color:#5a5a5a"></div>
<div class="t" style="left:885px;top:708px;font-size:16px;color:#fff;transform:scaleX(1.0387965162311954);transform-origin:0 0;">2022-01-13 16:49</div>
</body></html>
